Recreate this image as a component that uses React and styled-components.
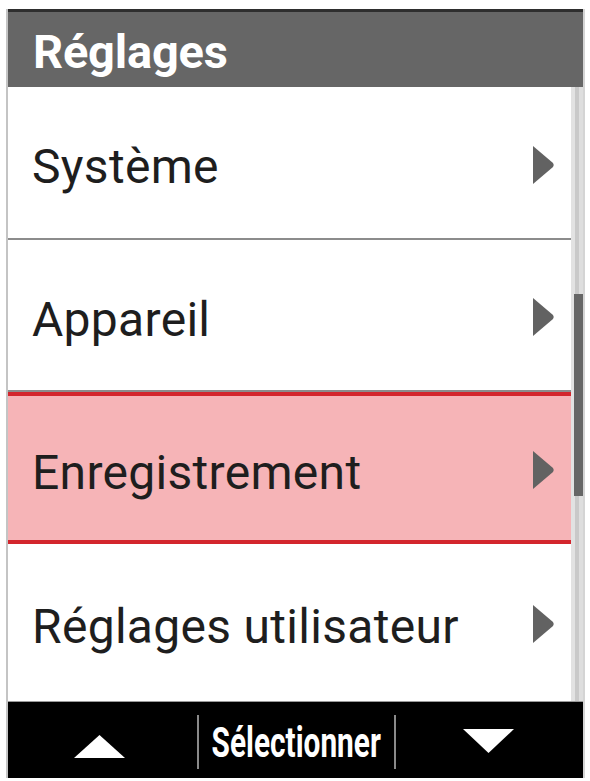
import React from "react";
import styled, { createGlobalStyle } from "styled-components";

const Global = createGlobalStyle`
  html, body { margin: 0; padding: 0; background: #ffffff; }
  body { font-family: Roboto, "Noto Sans", sans-serif; }
`;

const Page = styled.div`
  width: 590px;
  height: 781px;
  padding: 9px 5px 3px 6px;
  box-sizing: border-box;
  background: #fff;
`;

const Device = styled.div`
  height: 100%;
  display: flex;
  flex-direction: column;
  border-left: 2px solid #c4c4c4;
  border-right: 2px solid #d4d4d4;
  position: relative;
`;

const Header = styled.div`
  height: 78px;
  box-sizing: border-box;
  background: #666666;
  border-top: 3px solid #2e2e2e;
  display: flex;
  align-items: center;
  padding: 3px 0 0 25px;
  color: #fff;
  font-family: Roboto, sans-serif;
  font-weight: 700;
  font-size: 47px;
  letter-spacing: -0.2px;
`;

const List = styled.div`
  flex: 1;
  display: flex;
  flex-direction: column;
  position: relative;
`;

const Row = styled.div`
  height: ${(p) => p.$h}px;
  box-sizing: border-box;
  display: flex;
  align-items: center;
  justify-content: space-between;
  padding: 4px 28px 0 24px;
  background: ${(p) => (p.$selected ? "#f6b4b7" : "#ffffff")};
  border-top: ${(p) => (p.$selected ? "4px solid #d3262d" : "none")};
  border-bottom: ${(p) =>
    p.$selected ? "4px solid #d3262d" : p.$last ? "none" : "2px solid #8c8c8c"};
  color: #1e1e1e;
  font-family: Roboto, sans-serif;
  font-size: 48px;
  letter-spacing: 0.3px;
`;

const RowLabel = styled.span`
  padding-top: 4px;
`;

const Chevron = styled.svg`
  width: 24px;
  height: 42px;
  flex: none;
`;

const Track = styled.div`
  position: absolute;
  right: 0;
  top: 0;
  bottom: 0;
  width: 12px;
  background: linear-gradient(90deg, #e2e2e2 0 30%, #c9c9c9 30% 70%, #dedede 70%);
`;

const Thumb = styled.div`
  position: absolute;
  right: 0;
  top: 207px;
  height: 202px;
  width: 9px;
  background: #666666;
`;

const Bar = styled.div`
  height: 76px;
  background: #000;
  display: grid;
  grid-template-columns: 189px 1px 196px 1px 1fr;
  align-items: center;
  border-top: 1px solid #9a9a9a;
`;

const Cell = styled.div`
  display: flex;
  justify-content: center;
  align-items: center;
  height: 100%;
`;

const Sep = styled.div`
  width: 2px;
  height: 54px;
  background: #8a8a8a;
  margin-top: 4px;
`;

const Label = styled.span`
  display: inline-block;
  color: #fff;
  font-family: Roboto, sans-serif;
  font-weight: 700;
  font-size: 42px;
  transform: scaleX(0.71);
  white-space: nowrap;
  margin-top: 4px;
`;

const Arrow = styled.svg`
  width: 53px;
  height: 26px;
  margin-top: ${(p) => p.$mt}px;
  margin-left: ${(p) => p.$ml}px;
`;

const items = [
  { label: "Système", h: 153 },
  { label: "Appareil", h: 152 },
  { label: "Enregistrement", h: 152, selected: true },
  { label: "Réglages utilisateur", h: 156, last: true },
];

export default function App() {
  return (
    <>
      <Global />
      <Page>
        <Device>
          <Header>Réglages</Header>
          <List>
            {items.map((it) => (
              <Row key={it.label} $h={it.h} $selected={it.selected} $last={it.last}>
                <RowLabel>{it.label}</RowLabel>
                <Chevron viewBox="0 0 24 42">
                  <path d="M2 2 L22 19 Q23.5 21 22 23 L2 40 Z" fill="#626262" />
                </Chevron>
              </Row>
            ))}
            <Track />
            <Thumb />
          </List>
          <Bar>
            <Cell>
              <Arrow viewBox="0 0 53 26" $mt={14} $ml={-6}>
                <path d="M26.5 1 L52 24 L1 24 Z" fill="#fff" />
              </Arrow>
            </Cell>
            <Sep />
            <Cell>
              <Label>Sélectionner</Label>
            </Cell>
            <Sep />
            <Cell>
              <Arrow viewBox="0 0 53 26" $mt={2} $ml={-2}>
                <path d="M1 1 L52 1 L26.5 25 Z" fill="#fff" />
              </Arrow>
            </Cell>
          </Bar>
        </Device>
      </Page>
    </>
  );
}
